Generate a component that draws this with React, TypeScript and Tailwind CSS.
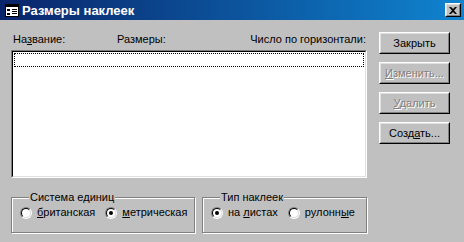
import React from "react";

const font = { fontFamily: '"Liberation Sans", Arial, sans-serif' };

function Btn({ children, disabled }: { children: React.ReactNode; disabled?: boolean }) {
  return (
    <div className="w-[71px] h-[22px] border border-t-white border-l-white border-r-black border-b-black bg-[#c0c0c0]">
      <div className="w-full h-full border border-t-[#dfdfdf] border-l-[#dfdfdf] border-r-[#808080] border-b-[#808080] flex items-center justify-center">
        <span
          className={
            disabled
              ? "text-[11px] leading-[13px] text-[#808080] [text-shadow:1px_1px_0_#fff]"
              : "text-[11px] leading-[13px] text-black"
          }
        >
          {children}
        </span>
      </div>
    </div>
  );
}

function Radio({ checked, children }: { checked?: boolean; children: React.ReactNode }) {
  return (
    <div className="flex items-center gap-[5px] h-[13px]">
      <div className="w-[12px] h-[12px] rounded-full border border-t-[#808080] border-l-[#808080] border-r-white border-b-white">
        <div className="w-full h-full rounded-full border border-t-black border-l-black border-r-[#dfdfdf] border-b-[#dfdfdf] bg-white flex items-center justify-center">
          {checked && <div className="w-[4px] h-[4px] rounded-full bg-black" />}
        </div>
      </div>
      <span className="text-[11px] leading-[13px] text-black">{children}</span>
    </div>
  );
}

function Group({ title, children, width }: { title: string; children: React.ReactNode; width: string }) {
  return (
    <fieldset
      className={`${width} border border-[#808080] shadow-[inset_1px_1px_0_#fff,1px_1px_0_#fff] pl-[8px] pb-[13px]`}
    >
      <legend className="ml-[9px] px-[1px] bg-[#c0c0c0] text-[11px] leading-[13px] text-black">{title}</legend>
      <div className="flex items-center gap-[10px] mt-[2px]">{children}</div>
    </fieldset>
  );
}

export default function App() {
  return (
    <div className="w-[464px] h-[242px] bg-[#c0c0c0] flex flex-col select-none" style={font}>
      {/* Title bar */}
      <div className="h-[20px] flex items-center bg-gradient-to-r from-[#0a246a] to-[#1084d0] pl-[5px] pr-[3px]">
        <svg width="14" height="13" viewBox="0 0 14 13" className="shrink-0">
          <rect x="0.5" y="0.5" width="13" height="12" fill="#fff" stroke="#000" />
          <rect x="0" y="0" width="14" height="3" fill="#000" />
          <rect x="2" y="5" width="3" height="2" fill="#000" />
          <rect x="2" y="9" width="3" height="2" fill="#000" />
          <rect x="7" y="5" width="5" height="1" fill="#000" />
          <rect x="7" y="7" width="5" height="1" fill="#000" />
          <rect x="7" y="9" width="5" height="1" fill="#000" />
        </svg>
        <span className="ml-[3px] text-white font-bold text-[13px] leading-[15px]">Размеры наклеек</span>
        <div className="ml-auto w-[16px] h-[14px] border border-t-white border-l-white border-r-black border-b-black bg-[#c0c0c0]">
          <div className="w-full h-full border border-t-[#dfdfdf] border-l-[#dfdfdf] border-r-[#808080] border-b-[#808080] flex items-center justify-center">
            <svg width="8" height="7" viewBox="0 0 8 7">
              <path d="M0 0h2l2 2 2-2h2L5 3.5 8 7H6L4 5 2 7H0l3-3.5z" fill="#000" />
            </svg>
          </div>
        </div>
      </div>

      {/* Body */}
      <div className="flex pl-[11px] pt-[12px]">
        <div className="w-[356px] flex flex-col">
          <div className="flex h-[18px] pt-[1px] text-[11px] leading-[13px] text-black">
            <span className="w-[106px] pl-[2px]">
              На<u>з</u>вание:
            </span>
            <span className="flex-1">Размеры:</span>
            <span className="pr-[1px]">Число по горизонтали:</span>
          </div>
          <div className="h-[128px] border border-t-[#808080] border-l-[#808080] border-r-white border-b-white">
            <div className="w-full h-full border border-t-black border-l-black border-r-[#dfdfdf] border-b-[#dfdfdf] bg-white p-px">
              <div className="h-[14px] border border-dotted border-black" />
            </div>
          </div>
          <div className="flex gap-[7px] mt-[13px]">
            <Group title="Система единиц" width="w-[184px]">
              <Radio>
                <u>б</u>ританская
              </Radio>
              <Radio checked>
                <u>м</u>етрическая
              </Radio>
            </Group>
            <Group title="Тип наклеек" width="w-[165px]">
              <Radio checked>
                на <u>л</u>истах
              </Radio>
              <Radio>
                рулонн<u>ы</u>е
              </Radio>
            </Group>
          </div>
        </div>

        <div className="ml-[12px] flex flex-col gap-[8px]">
          <Btn>Закрыть</Btn>
          <Btn disabled>
            <u>И</u>зменить...
          </Btn>
          <Btn disabled>
            <u>У</u>далить
          </Btn>
          <Btn>
            Созд<u>а</u>ть...
          </Btn>
        </div>
      </div>
    </div>
  );
}
